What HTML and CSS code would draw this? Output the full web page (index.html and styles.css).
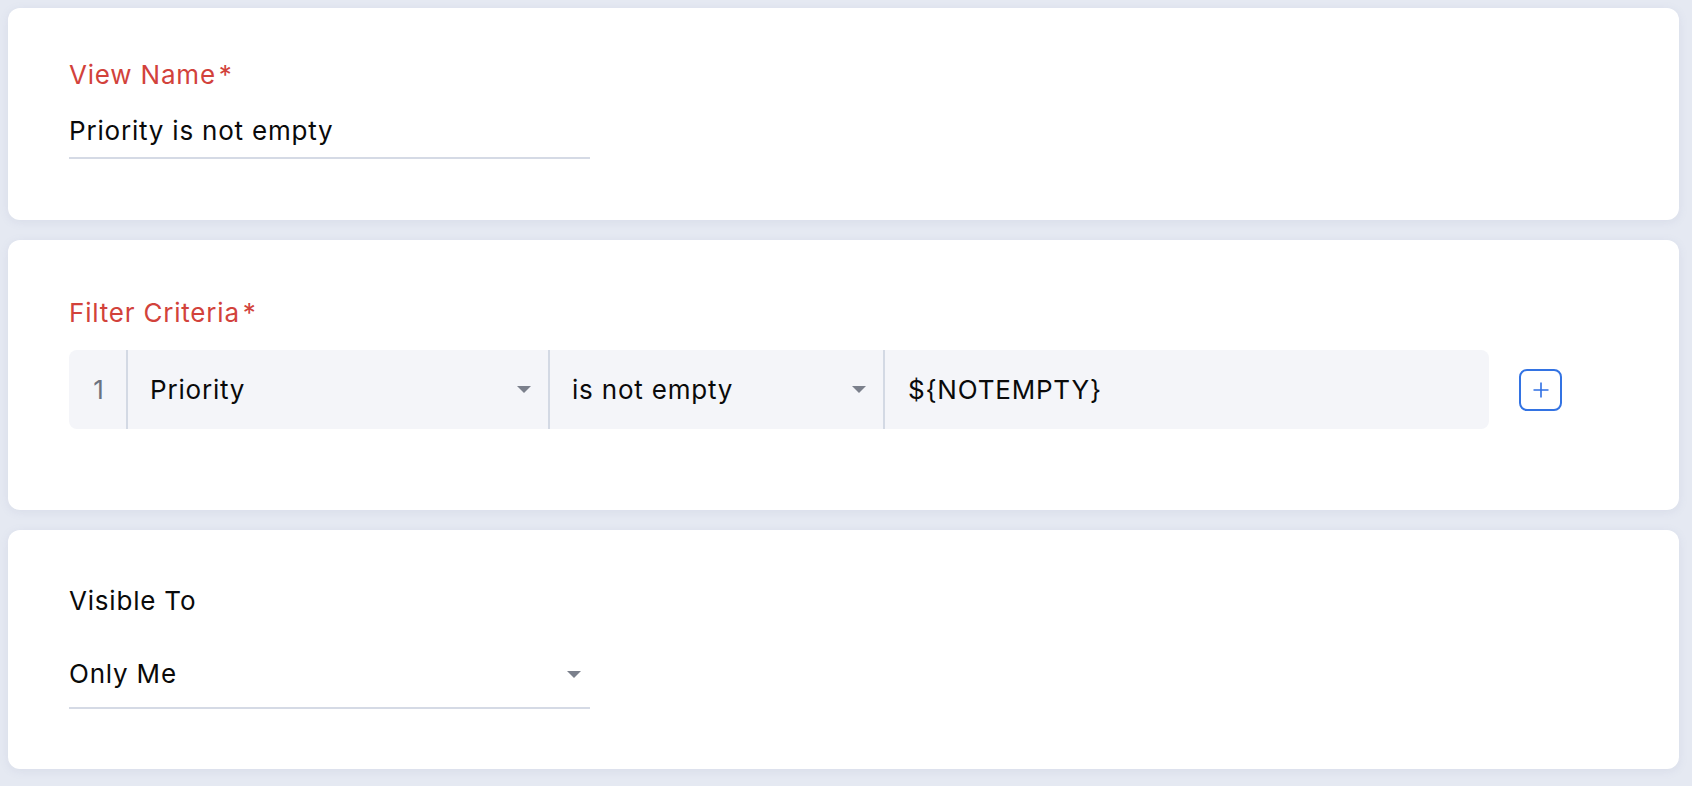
FILE: index.html
```html
<!DOCTYPE html>
<html lang="en">
<head>
<meta charset="utf-8">
<title>View</title>
<link rel="stylesheet" href="styles.css">
</head>
<body>
<main class="page">
  <section class="card card-name">
    <div class="label required">View Name<span class="star">*</span></div>
    <div class="text-input">Priority is not empty</div>
  </section>

  <section class="card card-filter">
    <div class="label required">Filter Criteria<span class="star">*</span></div>
    <div class="criteria">
      <div class="criteria-row">
        <div class="cell cell-index">1</div>
        <div class="cell cell-field">
          <span>Priority</span>
          <span class="caret"></span>
        </div>
        <div class="cell cell-op">
          <span>is not empty</span>
          <span class="caret"></span>
        </div>
        <div class="cell cell-value">${NOTEMPTY}</div>
      </div>
      <button class="add-btn" type="button" aria-label="Add">
        <svg width="18" height="18" viewBox="0 0 18 18"><path d="M9 1.5v15M1.5 9h15" stroke="#2f6fe4" stroke-width="1.6" fill="none"/></svg>
      </button>
    </div>
  </section>

  <section class="card card-visible">
    <div class="label">Visible To</div>
    <div class="select-input">
      <span>Only Me</span>
      <span class="caret"></span>
    </div>
  </section>
</main>
</body>
</html>
```

FILE: styles.css
```css
* { box-sizing: border-box; }

html, body {
  margin: 0;
  padding: 0;
}

body {
  background: #e5e9f2;
  font-family: "Inter", "Lato", sans-serif;
  letter-spacing: 0.8px;
  color: #0a0a0a;
}

.page {
  padding: 8px 13px 17px 8px;
  display: flex;
  flex-direction: column;
  gap: 20px;
}

.card {
  background: #fff;
  border-radius: 12px;
  box-shadow: 0 2px 10px rgba(120, 135, 170, 0.12);
  padding-left: 61px;
  padding-right: 60px;
}

.label {
  font-size: 26px;
  line-height: 30px;
  height: 30px;
  color: #0a0a0a;
}

.label.required {
  color: #d2423b;
}

.star {
  margin-left: 3px;
}

.card-name {
  height: 212px;
  padding-top: 52px;
}

.text-input {
  margin-top: 26px;
  width: 521px;
  font-size: 26px;
  line-height: 30px;
  padding-bottom: 11px;
  border-bottom: 2px solid #d5dae5;
}

.card-filter {
  height: 270px;
  padding-top: 58px;
}

.criteria {
  margin-top: 22px;
  display: flex;
  align-items: center;
  gap: 30px;
}

.criteria-row {
  width: 1420px;
  height: 79px;
  background: #f4f5f9;
  border-radius: 8px;
  display: flex;
  font-size: 26px;
}

.cell {
  display: flex;
  align-items: center;
  height: 100%;
}

.cell-index {
  width: 59px;
  justify-content: center;
  padding-left: 3px;
  color: #6b7280;
  border-right: 2px solid #d3d9e4;
}

.cell-field {
  width: 422px;
  padding: 0 17px 0 22px;
  justify-content: space-between;
  border-right: 2px solid #d3d9e4;
}

.cell-op {
  width: 335px;
  padding: 0 17px 0 22px;
  justify-content: space-between;
  border-right: 2px solid #d3d9e4;
}

.cell-value {
  flex: 1;
  padding-left: 23px;
}

.caret {
  width: 0;
  height: 0;
  border-left: 7px solid transparent;
  border-right: 7px solid transparent;
  border-top: 7px solid #7b808c;
}

.add-btn {
  width: 43px;
  height: 42px;
  border: 2px solid #3373e3;
  border-radius: 8px;
  background: #fff;
  display: flex;
  align-items: center;
  justify-content: center;
  padding: 0;
}

.card-visible {
  height: 239px;
  padding-top: 56px;
}

.select-input {
  margin-top: 43px;
  width: 521px;
  display: flex;
  align-items: center;
  justify-content: space-between;
  font-size: 26px;
  line-height: 30px;
  padding: 0 9px 18px 0;
  border-bottom: 2px solid #d5dae5;
}
```
